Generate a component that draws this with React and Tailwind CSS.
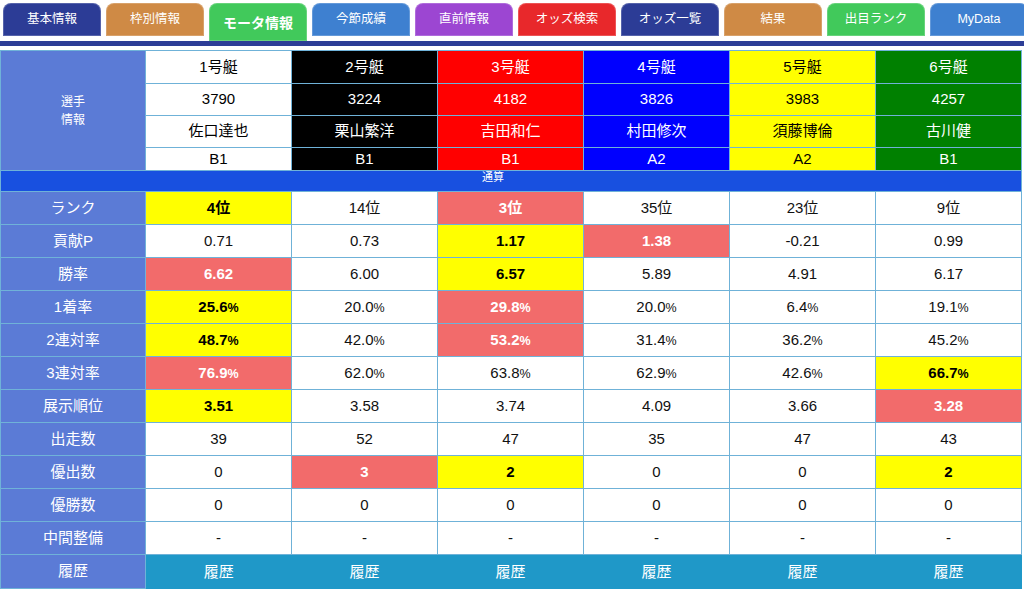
import React from 'react'

const FONT = { fontFamily: '"Liberation Sans", "Noto Sans CJK JP", sans-serif' }

const TABS = [
  { label: '基本情報', bg: 'bg-[#2c3c96]' },
  { label: '枠別情報', bg: 'bg-[#cf8a45]' },
  { label: 'モータ情報', bg: 'bg-[#41c95b]', active: true },
  { label: '今節成績', bg: 'bg-[#3e80d0]' },
  { label: '直前情報', bg: 'bg-[#9c46d2]' },
  { label: 'オッズ検索', bg: 'bg-[#e8282b]' },
  { label: 'オッズ一覧', bg: 'bg-[#2c3c96]' },
  { label: '結果', bg: 'bg-[#cf8a45]' },
  { label: '出目ランク', bg: 'bg-[#41c95b]' },
  { label: 'MyData', bg: 'bg-[#3e80d0]' },
]

const BOATS = [
  { no: '1号艇', id: '3790', name: '佐口達也', cls: 'B1', c: 'bg-white text-black' },
  { no: '2号艇', id: '3224', name: '栗山繁洋', cls: 'B1', c: 'bg-black text-white' },
  { no: '3号艇', id: '4182', name: '吉田和仁', cls: 'B1', c: 'bg-[#ff0000] text-white' },
  { no: '4号艇', id: '3826', name: '村田修次', cls: 'A2', c: 'bg-[#0000ff] text-white' },
  { no: '5号艇', id: '3983', name: '須藤博倫', cls: 'A2', c: 'bg-[#ffff00] text-black' },
  { no: '6号艇', id: '4257', name: '古川健', cls: 'B1', c: 'bg-[#008000] text-white' },
]

// Y = 黄色ハイライト, R = 赤ハイライト
const ROWS = [
  { label: 'ランク', vals: [['4位', 'Y'], ['14位'], ['3位', 'R'], ['35位'], ['23位'], ['9位']] },
  { label: '貢献P', vals: [['0.71'], ['0.73'], ['1.17', 'Y'], ['1.38', 'R'], ['-0.21'], ['0.99']] },
  { label: '勝率', vals: [['6.62', 'R'], ['6.00'], ['6.57', 'Y'], ['5.89'], ['4.91'], ['6.17']] },
  { label: '1着率', pct: true, vals: [['25.6', 'Y'], ['20.0'], ['29.8', 'R'], ['20.0'], ['6.4'], ['19.1']] },
  { label: '2連対率', pct: true, vals: [['48.7', 'Y'], ['42.0'], ['53.2', 'R'], ['31.4'], ['36.2'], ['45.2']] },
  { label: '3連対率', pct: true, vals: [['76.9', 'R'], ['62.0'], ['63.8'], ['62.9'], ['42.6'], ['66.7', 'Y']] },
  { label: '展示順位', vals: [['3.51', 'Y'], ['3.58'], ['3.74'], ['4.09'], ['3.66'], ['3.28', 'R']] },
  { label: '出走数', vals: [['39'], ['52'], ['47'], ['35'], ['47'], ['43']] },
  { label: '優出数', vals: [['0'], ['3', 'R'], ['2', 'Y'], ['0'], ['0'], ['2', 'Y']] },
  { label: '優勝数', vals: [['0'], ['0'], ['0'], ['0'], ['0'], ['0']] },
  { label: '中間整備', vals: [['-'], ['-'], ['-'], ['-'], ['-'], ['-']] },
]

const cellCls = mark =>
  mark === 'Y' ? 'bg-[#ffff00] text-black font-bold'
  : mark === 'R' ? 'bg-[#f26b6b] text-white font-bold'
  : 'bg-white text-[#111]'

export default function App()
{
  return (
    <div className="w-[1024px] h-[589px] overflow-hidden bg-white" style={FONT}>
      {/* tabs */}
      <div className="flex items-start gap-[5px] pl-[3px] pt-[3px] h-[41px] overflow-hidden">
        { TABS.map((t, k) => (
          <div key={k}
            className={'shrink-0 w-[98px] rounded-t-[8px] flex items-center justify-center text-white border border-white/20 ' + t.bg + (t.active ? ' h-[38px] text-[14px] font-bold pt-[2px]' : ' h-[33px] text-[12.5px]')}>
            {t.label}
          </div>
        )) }
      </div>
      <div className="h-[5px] bg-[#2d3d96]" />

      <table className="mt-[4px] table-fixed border-collapse w-[1021px] text-[15px]">
        <colgroup>
          <col className="w-[145px]" />
          { BOATS.map((b, k) => <col key={k} className="w-[146px]" />) }
        </colgroup>
        <tbody>
          <tr className="h-[33px]">
            <td rowSpan={4} className="bg-[#5b7bd6] text-white text-[12px] text-center leading-[18px] border border-[#6fb2d8]">
              選手<br />情報
            </td>
            { BOATS.map((b, k) => <td key={k} className={'text-center border border-[#6fb2d8] ' + b.c}>{b.no}</td>) }
          </tr>
          <tr className="h-[32px]">
            { BOATS.map((b, k) => <td key={k} className={'text-center border border-[#6fb2d8] ' + b.c}>{b.id}</td>) }
          </tr>
          <tr className="h-[32px]">
            { BOATS.map((b, k) => <td key={k} className={'text-center border border-[#6fb2d8] ' + b.c}>{b.name}</td>) }
          </tr>
          <tr className="h-[23px]">
            { BOATS.map((b, k) => <td key={k} className={'text-center leading-[20px] border border-[#6fb2d8] ' + b.c}>{b.cls}</td>) }
          </tr>
          <tr className="h-[21px]">
            <td colSpan={7} className="bg-[#1850e0] text-white text-[11px] leading-[12px] align-top text-center pr-[36px] border border-[#6fb2d8]">通算</td>
          </tr>
          { ROWS.map((r, i) => (
            <tr key={i} className="h-[33px]">
              <td className="bg-[#5b7bd6] text-white text-center border border-[#6fb2d8]">{r.label}</td>
              { r.vals.map(([v, m], k) => (
                <td key={k} className={'text-center border border-[#6fb2d8] ' + cellCls(m)}>
                  {v}{ r.pct && <span className="text-[12.5px]">%</span> }
                </td>
              )) }
            </tr>
          )) }
          <tr className="h-[34px]">
            <td className="bg-[#5b7bd6] text-white text-center border border-[#6fb2d8]">履歴</td>
            { BOATS.map((b, k) => <td key={k} className="bg-[#1f98c8] text-white text-center border-0">履歴</td>) }
          </tr>
        </tbody>
      </table>
    </div>
  )
}
